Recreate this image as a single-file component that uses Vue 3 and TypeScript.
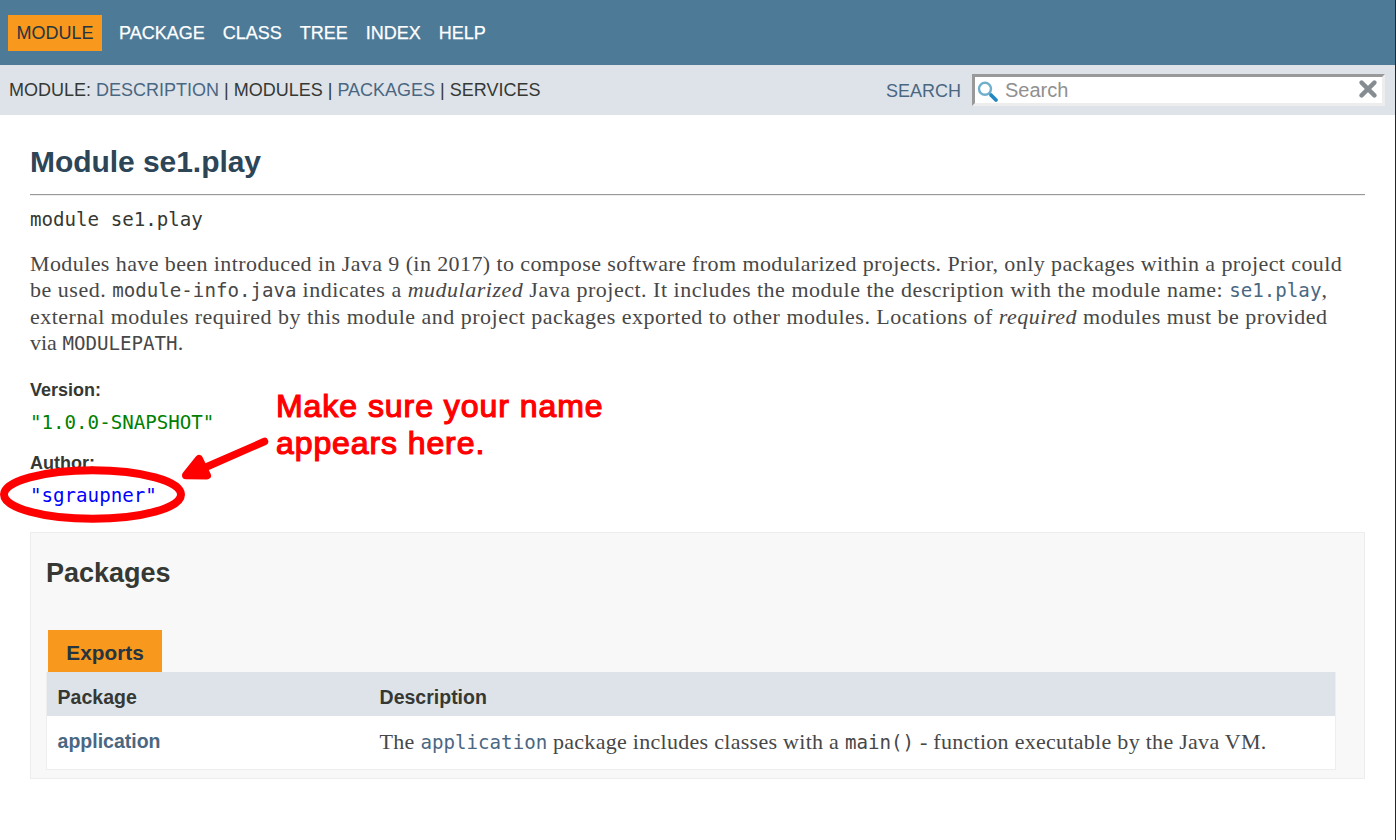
<script setup lang="ts">
interface NavItem {
  label: string
  active?: boolean
}
const navItems: NavItem[] = [
  { label: 'MODULE', active: true },
  { label: 'PACKAGE' },
  { label: 'CLASS' },
  { label: 'TREE' },
  { label: 'INDEX' },
  { label: 'HELP' },
]
</script>

<template>
  <div class="page">
    <header>
      <nav class="top-nav">
        <a v-for="item in navItems" :key="item.label" :class="{ active: item.active }">{{ item.label }}</a>
      </nav>
      <div class="sub-nav">
        <div class="sub-list">MODULE: <a>DESCRIPTION</a> | MODULES | <a>PACKAGES</a> | SERVICES</div>
        <div class="search">
          <label>SEARCH</label>
          <div class="search-box">
            <svg class="glass" width="22" height="22" viewBox="0 0 22 22">
              <circle cx="8" cy="7.8" r="6" fill="#fff" stroke="#6fb0cd" stroke-width="2.4" />
              <path d="M14 14L19 19" stroke="#2388c2" stroke-width="3.8" stroke-linecap="round" />
            </svg>
            <span class="placeholder">Search</span>
            <svg class="clear" width="18" height="18" viewBox="0 0 18 18">
              <path d="M2.6 2.6L15.4 15.4M15.4 2.6L2.6 15.4" stroke="#868d92" stroke-width="4.4" stroke-linecap="round" />
            </svg>
          </div>
        </div>
      </div>
    </header>
    <main>
      <h1>Module se1.play</h1>
      <hr />
      <div class="signature">module se1.play</div>
      <div class="block">
        <div class="l1">Modules have been introduced in Java 9 (in 2017) to compose software from modularized projects. Prior, only packages within a project could</div>
        <div class="l2">be used. <code>module-info.java</code> indicates a <i>mudularized</i> Java project. It includes the module the description with the module name: <code class="link">se1.play</code>,</div>
        <div class="l3">external modules required by this module and project packages exported to other modules. Locations of <i>required</i> modules must be provided</div>
        <div class="l4">via <code>MODULEPATH</code>.</div>
      </div>
      <dl>
        <dt>Version:</dt>
        <dd class="version">"1.0.0-SNAPSHOT"</dd>
        <dt>Author:</dt>
        <dd class="author">"sgraupner"</dd>
      </dl>
      <section>
        <h2>Packages</h2>
        <div class="caption">Exports</div>
        <div class="table">
          <div class="row head"><div>Package</div><div>Description</div></div>
          <div class="row">
            <a>application</a>
            <div class="desc">The <code class="link">application</code> package includes classes with a <code>main()</code> - function executable by the Java VM.</div>
          </div>
        </div>
      </section>
    </main>
    <svg class="marks" width="290" height="540" viewBox="0 0 290 540">
      <ellipse cx="92.5" cy="494.5" rx="88.5" ry="24.3" fill="none" stroke="#f00" stroke-width="8" />
      <path d="M264.5 441.5L204 468" stroke="#f00" stroke-width="7.5" stroke-linecap="round" />
      <path d="M186 475.3L199 459L207 475.5Z" fill="#f00" stroke="#f00" stroke-width="8" stroke-linejoin="round" />
    </svg>
    <div class="note"><div>Make sure your name</div><div class="n2">appears here.</div></div>
  </div>
</template>

<style>
body { margin: 0; overflow: hidden; background: #fff; }
</style>

<style scoped>
.page {
  position: relative;
  box-sizing: border-box;
  width: 1396px;
  height: 840px;
  border-right: 1px solid #23272a;
  overflow: hidden;
  color: #353833;
  font-family: "Liberation Sans", Arial, sans-serif;
  white-space: nowrap;
}
.top-nav {
  box-sizing: border-box;
  height: 65px;
  padding: 15px 8px 14px;
  background: #4d7a97;
  display: flex;
  align-items: flex-start;
  font-size: 18px;
  line-height: 36px;
  color: #fff;
}
.top-nav a { margin-right: 18px; -webkit-text-stroke: 0.25px #fff; }
.top-nav .active {
  padding: 0 8.5px;
  margin-right: 17px;
  background: #f8981d;
  color: #253441;
  -webkit-text-stroke: 0;
}
.sub-nav {
  height: 50px;
  background: #dee3e9;
  display: flex;
  justify-content: space-between;
  font-size: 18px;
}
.sub-list { padding-left: 9px; line-height: 50px; }
.sub-nav a, label, .link { color: #4a6782; }
.search { display: flex; padding: 9px 10px 0 0; }
label { line-height: 34px; margin-right: 11px; }
.search-box {
  box-sizing: border-box;
  width: 413px;
  height: 32px;
  border: 3px solid;
  border-color: #999 #ededed #ededed #999;
  background: #fff;
  display: flex;
  align-items: flex-start;
}
.glass { margin: 4px 0 0 2px; }
.placeholder { margin-left: 6px; font-size: 20px; line-height: 26px; color: #909090; flex: 1; }
.clear { margin: 3px 5px 0 0; }
main { padding: 0 30px; }
h1 { margin: 30px 0 0; font-size: 30px; line-height: 34px; color: #2c4557; letter-spacing: -0.05px; }
hr { margin: 15px 0 0; border: 0; border-top: 1px solid #999; border-bottom: 1px solid #eee; }
code, .signature, dd { font-family: "DejaVu Sans Mono", monospace; font-size: 19.15px; letter-spacing: 0; }
.signature { margin-top: 11px; line-height: 26px; }
.block {
  margin-top: 18px;
  font-family: "Liberation Serif", serif;
  font-size: 22px;
  line-height: 26.4px;
  color: #474747;
}
.block > div { height: 26.4px; }
.l1 { letter-spacing: 0.405px; }
.l2 { letter-spacing: 0.51px; }
.l3 { letter-spacing: 0.49px; }
.l4 { letter-spacing: 0; }
dl { margin: 22px 0 0; }
dt { font-size: 18px; font-weight: bold; line-height: 22px; }
dd { margin: 10px 0 17px; line-height: 24px; }
.version { color: green; }
.author { color: #00f; }
section {
  box-sizing: border-box;
  height: 247px;
  margin-top: 24px;
  padding: 24px 28px 0 15px;
  border: 1px solid #ededed;
  background: #f8f8f8;
}
h2 { margin: 0; font-size: 27px; line-height: 32px; }
.caption {
  width: 114px;
  height: 42px;
  margin: 41px 0 0 2px;
  background: #f8981d;
  color: #253441;
  font-size: 20.8px;
  font-weight: bold;
  line-height: 46px;
  text-align: center;
}
.table { border: 1px solid #eee; border-top: 0; background: #fff; }
.row { display: grid; grid-template-columns: 322px 1fr; padding-left: 10.6px; height: 53px; line-height: 50px; }
.head { background: #dee3e9; height: 44px; font-size: 19.5px; font-weight: bold; line-height: 50px; }
.row a { color: #4a6782; font-weight: bold; font-size: 19.5px; }
.desc { font-family: "Liberation Serif", serif; font-size: 22px; line-height: 52px; color: #474747; letter-spacing: 0.285px; }
.marks { position: absolute; left: 0; top: 0; }
.note {
  position: absolute;
  left: 276px;
  top: 388px;
  color: #f00;
  font-size: 32px;
  line-height: 37px;
  letter-spacing: 0.95px;
  -webkit-text-stroke: 1.2px #f00;
}
.n2 { letter-spacing: 0.9px; }
</style>
